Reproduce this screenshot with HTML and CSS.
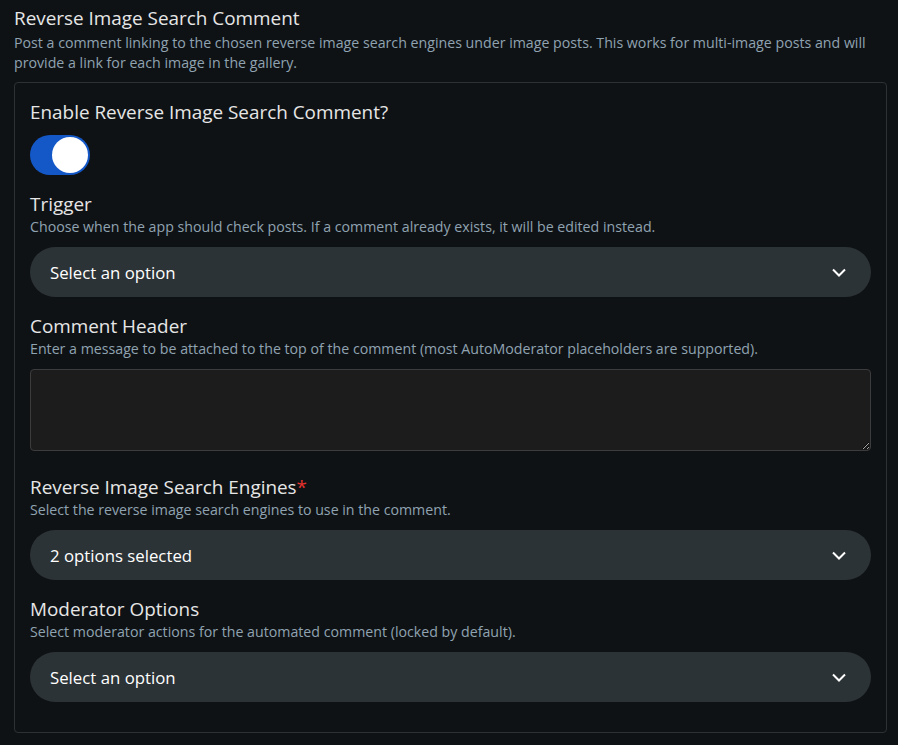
FILE: index.html
```html
<!DOCTYPE html>
<html lang="en">
<head>
    <meta charset="UTF-8">
    <meta name="viewport" content="width=device-width, initial-scale=1.0">
    <title>Reverse Image Search Comment</title>
    <link rel="stylesheet" href="styles.css">
</head>
<body>
    <div class="container">
        <h2 class="section-title">Reverse Image Search Comment</h2>
        <p class="section-desc">Post a comment linking to the chosen reverse image search engines under image posts. This works for multi-image posts and will provide a link for each image in the gallery.</p>

        <div class="group-box">
            <div class="field">
                <label class="field-label">Enable Reverse Image Search Comment?</label>
                <div class="toggle on" onclick="this.classList.toggle('on')">
                    <div class="knob"></div>
                </div>
            </div>

            <div class="field">
                <label class="field-label">Trigger</label>
                <p class="field-desc">Choose when the app should check posts. If a comment already exists, it will be edited instead.</p>
                <div class="select">
                    <span>Select an option</span>
                    <svg class="chevron" width="14" height="9" viewBox="0 0 14 9"><path d="M1 1.5l6 6 6-6" fill="none" stroke="#fff" stroke-width="2"/></svg>
                </div>
            </div>

            <div class="field">
                <label class="field-label">Comment Header</label>
                <p class="field-desc">Enter a message to be attached to the top of the comment (most AutoModerator placeholders are supported).</p>
                <textarea class="text-area"></textarea>
            </div>

            <div class="field">
                <label class="field-label">Reverse Image Search Engines<span class="required">*</span></label>
                <p class="field-desc">Select the reverse image search engines to use in the comment.</p>
                <div class="select">
                    <span>2 options selected</span>
                    <svg class="chevron" width="14" height="9" viewBox="0 0 14 9"><path d="M1 1.5l6 6 6-6" fill="none" stroke="#fff" stroke-width="2"/></svg>
                </div>
            </div>

            <div class="field">
                <label class="field-label">Moderator Options</label>
                <p class="field-desc">Select moderator actions for the automated comment (locked by default).</p>
                <div class="select">
                    <span>Select an option</span>
                    <svg class="chevron" width="14" height="9" viewBox="0 0 14 9"><path d="M1 1.5l6 6 6-6" fill="none" stroke="#fff" stroke-width="2"/></svg>
                </div>
            </div>
        </div>
    </div>
</body>
</html>
```

FILE: styles.css
```css
body {
    font-family: "Open Sans", "Noto Sans", Arial, sans-serif;
    margin: 0;
    padding: 0;
    background-color: #0f1215;
    color: #e4e4e4;
    color-scheme: dark;
}
.container {
    padding: 6px 11px 13px 14px;
}
.section-title {
    margin: 0;
    font-size: 18.9px;
    font-weight: 400;
    line-height: 24px;
    color: #e6e6e6;
}
.section-desc {
    margin: 3px 0 9px;
    font-size: 14.2px;
    line-height: 20px;
    color: #8fa3b1;
}
.group-box {
    border: 1px solid #2e3033;
    border-radius: 4px;
    padding: 17px 15px 30px;
    display: flex;
    flex-direction: column;
    gap: 17px;
}
.field {
    display: flex;
    flex-direction: column;
}
.field-label {
    font-size: 18.9px;
    line-height: 24px;
    color: #e6e6e6;
}
.required {
    color: #e5322d;
}
.field-desc {
    margin: 1px 0 10px;
    font-size: 14.2px;
    line-height: 20px;
    color: #8fa3b1;
}
.toggle {
    margin-top: 11px;
    width: 60px;
    height: 40px;
    border-radius: 20px;
    background-color: #3a3f44;
    padding: 2px;
    box-sizing: border-box;
    cursor: pointer;
    display: flex;
}
.toggle.on {
    background-color: #1458c8;
    justify-content: flex-end;
}
.knob {
    width: 36px;
    height: 36px;
    border-radius: 50%;
    background-color: #fff;
}
.select {
    height: 50px;
    border-radius: 25px;
    background-color: #2c3336;
    display: flex;
    align-items: center;
    justify-content: space-between;
    padding: 0 25px 0 20px;
    font-size: 16.8px;
    color: #fff;
    cursor: pointer;
}
.text-area {
    display: block;
    box-sizing: border-box;
    width: 100%;
    height: 82px;
    margin-bottom: 7px;
    background-color: #1c1c1c;
    border: 1px solid #3c3c3c;
    border-radius: 4px;
    color: #e4e4e4;
    font-family: inherit;
    resize: vertical;
}
```
